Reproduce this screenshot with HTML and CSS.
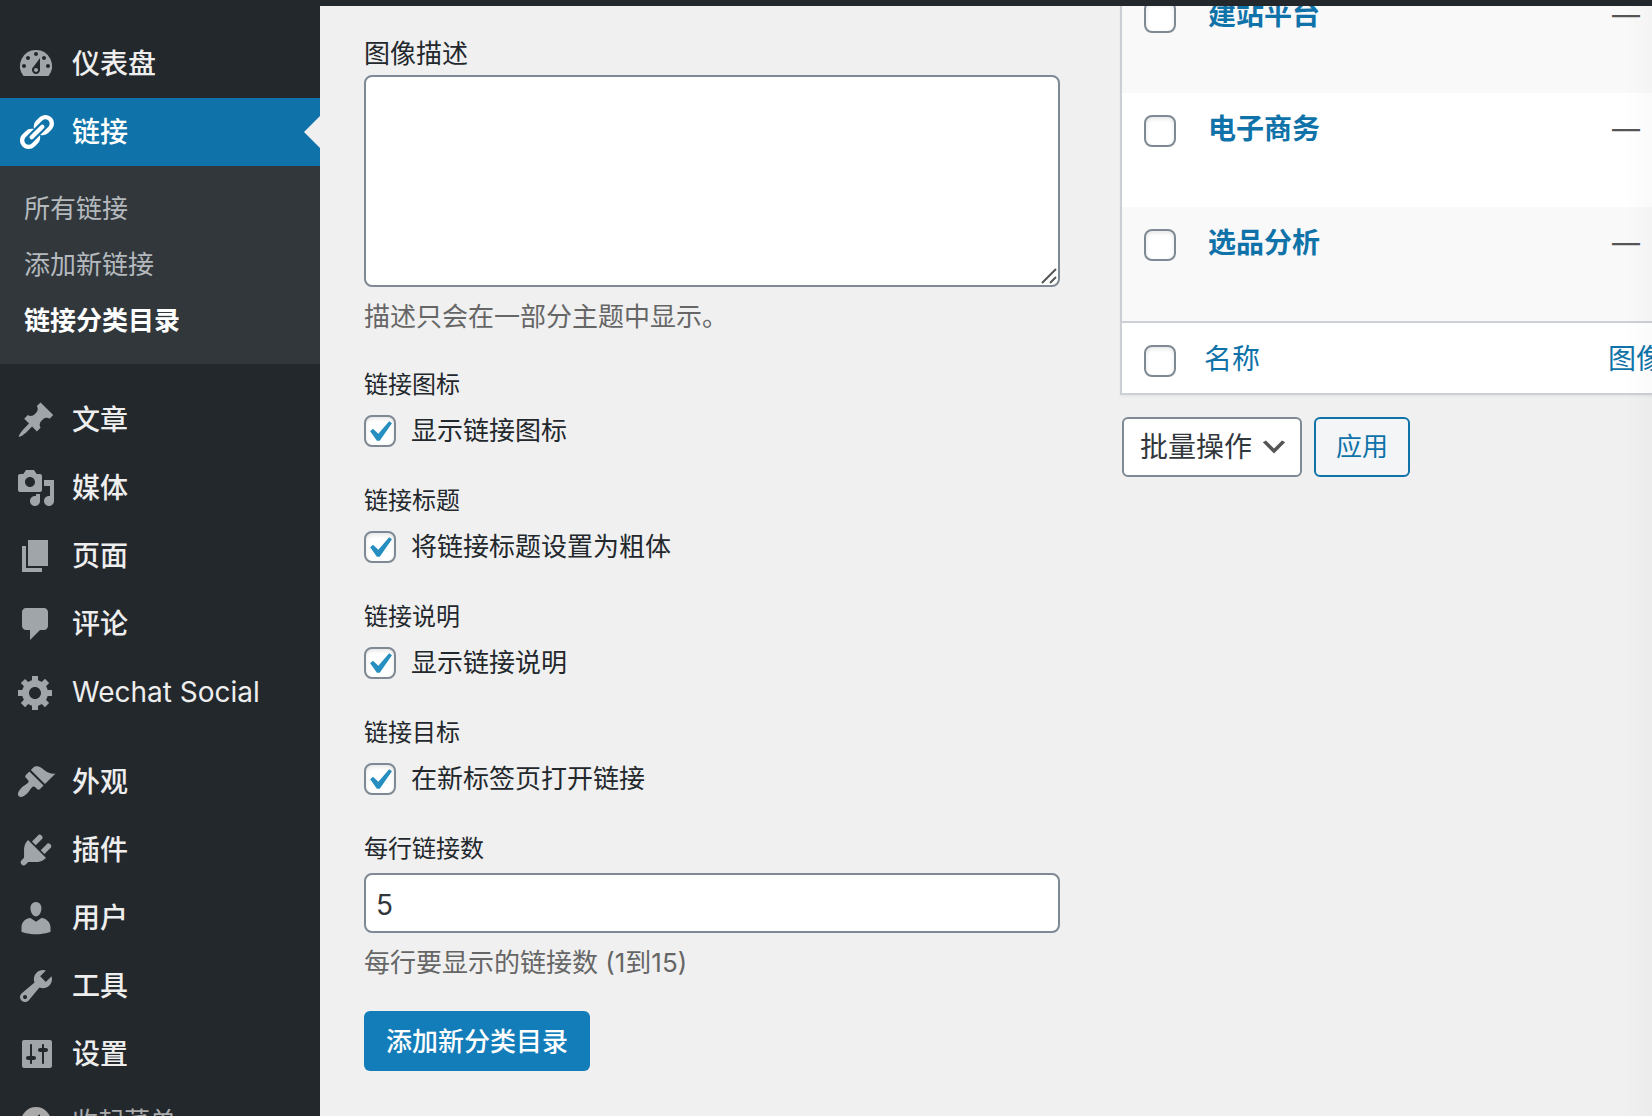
FILE: index.html
```html
<!DOCTYPE html>
<html lang="zh-CN">
<head>
<meta charset="utf-8">
<title>链接分类目录</title>
<link rel="stylesheet" href="styles.css">
</head>
<body>
<header class="admin-bar"></header>
<div class="layout">
  <nav class="sidebar">
    <ul class="menu">
      <li><a class="menu-item" href="#"><svg class="icon" viewBox="0 0 20 20"><path fill-rule="evenodd" d="M3.76 16h12.48A7.998 7.998 0 0 0 10 3a7.998 7.998 0 0 0-6.24 13zM10 4c.55 0 1 .45 1 1s-.45 1-1 1-1-.45-1-1 .45-1 1-1zM6 6c.55 0 1 .45 1 1s-.45 1-1 1-1-.45-1-1 .45-1 1-1zm8 0c.55 0 1 .45 1 1s-.45 1-1 1-1-.45-1-1 .45-1 1-1zm-5.37 5.55L12 7v6c0 1.1-.9 2-2 2s-2-.9-2-2c0-.57.24-1.08.63-1.45zM4 10c.55 0 1 .45 1 1s-.45 1-1 1-1-.45-1-1 .45-1 1-1zm12 0c.55 0 1 .45 1 1s-.45 1-1 1-1-.45-1-1 .45-1 1-1zm-5 3c0-.55-.45-1-1-1s-1 .45-1 1 .45 1 1 1 1-.45 1-1z"/></svg>仪表盘</a></li>
      <li>
        <a class="menu-item current" href="#"><svg class="icon" viewBox="0 0 20 20"><path d="M17.74 2.76c1.68 1.69 1.68 4.41 0 6.1l-1.53 1.52c-1.12 1.12-2.7 1.47-4.14 1.09l2.62-2.61.76-.77.76-.76c.84-.84.84-2.2 0-3.04-.84-.85-2.2-.85-3.04 0l-.77.76-3.38 3.38c-.37-1.44-.02-3.02 1.1-4.14l1.52-1.53c1.69-1.68 4.42-1.68 6.1 0zM8.59 13.43l5.34-5.34c.42-.42.42-1.1 0-1.52-.44-.43-1.13-.39-1.53 0l-5.33 5.34c-.42.42-.42 1.1 0 1.52.44.43 1.13.39 1.52 0zm-.76 2.29l4.14-4.15c.38 1.44.03 3.02-1.09 4.14l-1.52 1.53c-1.69 1.68-4.41 1.68-6.1 0-1.68-1.68-1.68-4.42 0-6.1l1.53-1.52c1.12-1.12 2.7-1.47 4.14-1.1l-4.14 4.15c-.85.84-.85 2.2 0 3.05.84.84 2.2.84 3.04 0z"/></svg>链接</a>
        <ul class="submenu">
          <li><a href="#">所有链接</a></li>
          <li><a href="#">添加新链接</a></li>
          <li><a class="active" href="#">链接分类目录</a></li>
        </ul>
      </li>
    </ul>
    <ul class="menu">
      <li><a class="menu-item" href="#"><svg class="icon" viewBox="0 0 20 20"><path d="M10.44 3.02l1.82-1.82 6.36 6.35-1.83 1.82c-1.05-.68-2.48-.57-3.41.36l-.75.75c-.92.93-1.04 2.35-.35 3.41l-1.83 1.82-2.41-2.41-2.8 2.79c-.42.42-3.38 2.71-3.8 2.29s1.86-3.39 2.28-3.81l2.79-2.79L4.1 9.36l1.83-1.82c1.05.69 2.48.57 3.4-.36l.75-.75c.93-.92 1.05-2.35.36-3.41z"/></svg>文章</a></li>
      <li><a class="menu-item" href="#"><svg class="icon" viewBox="0 0 20 20"><path fill-rule="evenodd" d="M13 11V4c0-.55-.45-1-1-1h-1.67L9 1H5L3.67 3H2c-.55 0-1 .45-1 1v7c0 .55.45 1 1 1h10c.55 0 1-.45 1-1zM7 4.5c1.38 0 2.5 1.12 2.5 2.5S8.38 9.5 7 9.5 4.5 8.38 4.5 7 5.62 4.5 7 4.5zM14 6h5v10.5c0 1.38-1.12 2.5-2.5 2.5S14 17.88 14 16.5s1.12-2.5 2.5-2.5c.17 0 .34.02.5.05V9h-3V6zm-4 8.05V13h2v3.5c0 1.38-1.12 2.5-2.5 2.5S7 17.88 7 16.5 8.12 14 9.5 14c.17 0 .34.02.5.05z"/></svg>媒体</a></li>
      <li><a class="menu-item" href="#"><svg class="icon" viewBox="0 0 20 20"><path d="M6 15V2h10v13H6zm-1 1h8v2H3V5h2v11z"/></svg>页面</a></li>
      <li><a class="menu-item" href="#"><svg class="icon" viewBox="0 0 20 20"><path d="M5 2h9c1.1 0 2 .9 2 2v7c0 1.1-.9 2-2 2h-2l-5 5v-5H5c-1.1 0-2-.9-2-2V4c0-1.1.9-2 2-2z"/></svg>评论</a></li>
      <li><a class="menu-item latin" href="#"><svg class="icon" viewBox="0 0 20 20"><path fill-rule="evenodd" d="M18 12h-2.18c-.17.7-.44 1.35-.81 1.93l1.54 1.54-2.1 2.1-1.54-1.54c-.58.36-1.23.63-1.91.79V19H8v-2.18c-.68-.16-1.33-.43-1.91-.79l-1.54 1.54-2.12-2.12 1.54-1.54c-.36-.58-.63-1.23-.79-1.91H1V9.03h2.17c.16-.7.44-1.35.8-1.94L2.43 5.55l2.1-2.1 1.54 1.54c.58-.37 1.24-.64 1.93-.81V2h3v2.18c.68.16 1.33.43 1.91.79l1.54-1.54 2.12 2.12-1.54 1.54c.36.59.64 1.24.8 1.94H18V12zm-8.5 1.5c1.66 0 3-1.34 3-3s-1.34-3-3-3-3 1.34-3 3 1.34 3 3 3z"/></svg>Wechat Social</a></li>
    </ul>
    <ul class="menu">
      <li><a class="menu-item" href="#"><svg class="icon" viewBox="0 0 20 20"><path d="M14.48 11.06L7.41 3.99l1.5-1.5c.5-.56 2.3-.47 3.51.32 1.21.8 1.43 1.28 2.91 2.1 1.18.64 2.45 1.26 4.45.85zm-.71.71L6.7 4.7 4.93 6.47c-.39.39-.39 1.02 0 1.41l1.06 1.06c.39.39.39 1.03 0 1.42-.6.6-1.43 1.11-2.21 1.69-.35.26-.7.53-1.01.84C1.43 14.23.4 16.08 1.4 17.07c.99 1 2.84-.03 4.18-1.36.31-.31.58-.66.85-1.02.57-.78 1.08-1.61 1.69-2.21.39-.39 1.02-.39 1.41 0l1.06 1.06c.39.39 1.02.39 1.41 0z"/></svg>外观</a></li>
      <li><a class="menu-item" href="#"><svg class="icon" viewBox="0 0 20 20"><path d="M13.11 4.36L9.87 7.6 8 5.73l3.24-3.24c.35-.34 1.05-.2 1.56.32.52.51.66 1.21.31 1.55zm-8 1.77l.91-1.12 9.01 9.01-1.19.84c-.71.71-2.63 1.16-3.82 1.16H6.14L4.9 17.26c-.59.59-1.54.59-2.12 0-.59-.58-.59-1.53 0-2.12l1.24-1.24v-3.88c0-1.13.4-3.19 1.09-3.89zm7.26 3.97l3.24-3.24c.34-.35 1.04-.21 1.55.31.52.51.66 1.21.31 1.55l-3.24 3.25z"/></svg>插件</a></li>
      <li><a class="menu-item" href="#"><svg class="icon" viewBox="0 0 20 20"><path d="M10 9.25c-2.27 0-2.73-3.44-2.73-3.44C7 4.02 7.82 2 9.97 2c2.16 0 2.98 2.02 2.71 3.81 0 0-.41 3.44-2.68 3.44zm0 2.57L12.72 10c2.39 0 4.52 2.33 4.52 4.53v2.49s-3.65 1.13-7.24 1.13c-3.65 0-7.24-1.13-7.24-1.13v-2.49c0-2.25 1.94-4.48 4.47-4.48z"/></svg>用户</a></li>
      <li><a class="menu-item" href="#"><svg class="icon" viewBox="0 0 20 20"><path fill-rule="evenodd" d="M16.68 9.77c-1.34 1.34-3.3 1.67-4.95.99l-5.41 6.52c-.99.99-2.59.99-3.58 0s-.99-2.59 0-3.57l6.52-5.42c-.68-1.65-.35-3.61.99-4.95 1.28-1.28 3.12-1.62 4.72-1.06l-2.89 2.89 2.82 2.82 2.86-2.87c.53 1.58.18 3.39-1.08 4.65zM3.81 16.21c.4.39 1.04.39 1.43 0 .4-.4.4-1.04 0-1.43-.39-.4-1.03-.4-1.43 0-.39.39-.39 1.03 0 1.43z"/></svg>工具</a></li>
      <li><a class="menu-item" href="#"><svg class="icon" viewBox="0 0 20 20"><path fill-rule="evenodd" d="M18 16V4c0-.55-.45-1-1-1H4c-.55 0-1 .45-1 1v12c0 .55.45 1 1 1h13c.55 0 1-.45 1-1zM8 11h1c.55 0 1 .45 1 1s-.45 1-1 1H8v1.5c0 .28-.22.5-.5.5s-.5-.22-.5-.5V13H6c-.55 0-1-.45-1-1s.45-1 1-1h1V5.5c0-.28.22-.5.5-.5s.5.22.5.5V11zm5-2h-1c-.55 0-1-.45-1-1s.45-1 1-1h1V5.5c0-.28.22-.5.5-.5s.5.22.5.5V7h1c.55 0 1 .45 1 1s-.45 1-1 1h-1v5.5c0 .28-.22.5-.5.5s-.5-.22-.5-.5V9z"/></svg>设置</a></li>
      <li><button class="menu-item collapse" type="button"><svg class="icon" viewBox="0 0 20 20"><path fill-rule="evenodd" d="M10 2.5a7.5 7.5 0 1 1 0 15a7.5 7.5 0 0 1 0-15zM12 13.88V6.12L6.18 9.97z"/></svg>收起菜单</button></li>
    </ul>
  </nav>
  <main class="content">
    <form class="form">
      <div class="field">
        <label class="label label-large" for="description">图像描述</label>
        <div class="textarea-wrap">
          <textarea id="description" class="textarea"></textarea>
          <svg class="grip" viewBox="0 0 16 16"><path d="M1 15L15 1M9 15L15 9"/></svg>
        </div>
        <p class="help">描述只会在一部分主题中显示。</p>
      </div>
      <fieldset class="option">
        <legend class="label">链接图标</legend>
        <label class="check-row"><input class="checkbox" type="checkbox" checked>显示链接图标</label>
      </fieldset>
      <fieldset class="option">
        <legend class="label">链接标题</legend>
        <label class="check-row"><input class="checkbox" type="checkbox" checked>将链接标题设置为粗体</label>
      </fieldset>
      <fieldset class="option">
        <legend class="label">链接说明</legend>
        <label class="check-row"><input class="checkbox" type="checkbox" checked>显示链接说明</label>
      </fieldset>
      <fieldset class="option">
        <legend class="label">链接目标</legend>
        <label class="check-row"><input class="checkbox" type="checkbox" checked>在新标签页打开链接</label>
      </fieldset>
      <div class="field">
        <label class="label" for="per-row">每行链接数</label>
        <input id="per-row" class="text-input" type="text" value="5">
        <p class="help">每行要显示的链接数 (1到15)</p>
      </div>
      <button class="button-primary" type="button">添加新分类目录</button>
    </form>
    <section class="list">
      <table class="table">
        <colgroup><col class="col-check"><col class="col-name"><col></colgroup>
        <tbody>
          <tr><td class="check"><input class="checkbox" type="checkbox" aria-label="选择建站平台"></td><td><a class="name" href="#">建站平台</a></td><td>—</td></tr>
          <tr><td class="check"><input class="checkbox" type="checkbox" aria-label="选择电子商务"></td><td><a class="name" href="#">电子商务</a></td><td>—</td></tr>
          <tr><td class="check"><input class="checkbox" type="checkbox" aria-label="选择选品分析"></td><td><a class="name" href="#">选品分析</a></td><td>—</td></tr>
        </tbody>
        <tfoot>
          <tr><td class="check"><input class="checkbox" type="checkbox" aria-label="全选"></td><th scope="col"><a href="#">名称</a></th><th scope="col"><a href="#">图像</a></th></tr>
        </tfoot>
      </table>
      <div class="bulk">
        <select class="select" aria-label="批量操作"><option>批量操作</option></select>
        <button class="button" type="button">应用</button>
      </div>
    </section>
  </main>
</div>
</body>
</html>
```
FILE: styles.css
```css
* { box-sizing: border-box; }

body {
  margin: 0;
  height: 100vh;
  overflow: hidden;
  display: flex;
  flex-direction: column;
  background: #f0f0f0;
  color: #23282d;
  font-family: Inter, "Noto Sans CJK SC", sans-serif;
  font-size: 26px;
  line-height: 40px;
}

button, input, select, textarea { font: inherit; margin: 0; }
a { color: #0f73a9; text-decoration: none; }
ul { list-style: none; margin: 0; padding: 0; }

.admin-bar { flex: none; height: 6px; background: #23282d; }
.layout { flex: 1; min-height: 0; display: flex; }

/* Sidebar */
.sidebar {
  flex: none;
  width: 320px;
  padding-top: 24px;
  overflow: hidden;
  background: #23282d;
}
.menu { margin-bottom: 22px; }
.menu-item {
  display: flex;
  align-items: center;
  gap: 16px;
  width: 100%;
  height: 68px;
  padding: 0 16px;
  color: #eee;
  font-size: 28px;
  font-weight: 500;
}
.latin { font-weight: 400; }
.icon { flex: none; width: 40px; height: 40px; fill: #a0a5aa; }
.current { position: relative; background: #0f73a9; color: #fff; }
.current .icon { fill: #fff; }
.current::after {
  content: "";
  position: absolute;
  right: 0;
  top: 18px;
  border: 16px solid transparent;
  border-left-width: 0;
  border-right-color: #f0f0f0;
}
.collapse { border: 0; background: none; color: #aaa; font-size: 26px; font-weight: 400; }
.collapse .icon { fill: #aaa; }
.submenu { padding: 15px 0; background: #32373c; }
.submenu a { display: block; padding: 8px 24px; color: #b4b9be; }
.submenu .active { color: #fff; font-weight: 600; }

/* Content */
.content {
  position: relative;
  flex: 1;
  min-width: 0;
  overflow: hidden;
  display: grid;
  grid-template-columns: minmax(0, 174fr) minmax(0, 133fr);
  gap: 60px;
  align-items: start;
  padding-left: 44px;
}
.content::after {
  content: "";
  position: absolute;
  inset: 0 0 0 auto;
  width: 28px;
  background: linear-gradient(to right, transparent, rgba(0, 0, 0, 0.02));
  pointer-events: none;
}

.form { padding-top: 28px; }
.label { display: block; padding: 0; font-size: 24px; line-height: 40px; }
.label-large { font-size: 26px; }
.field .label { margin-bottom: 4px; }
.field .label-large { margin-bottom: 1px; }
.textarea-wrap { position: relative; }
.textarea, .text-input {
  display: block;
  width: 100%;
  border: 2px solid #7e8993;
  border-radius: 8px;
  background: #fff;
  color: #32373c;
}
.textarea { height: 212px; padding: 4px 12px; resize: none; }
.text-input { height: 60px; padding: 3px 10px 0; font-size: 28px; }
.grip {
  position: absolute;
  right: 3px;
  bottom: 3px;
  width: 16px;
  height: 16px;
  fill: none;
  stroke: #555;
  stroke-width: 2;
}
.help { margin: 10px 0 0; color: #666; }
.field + .option { margin-top: 28px; }
.option { margin: 0 0 32px; padding: 0; border: 0; }
.check-row { display: flex; align-items: center; gap: 15px; height: 44px; padding-top: 8px; }

.checkbox {
  appearance: none;
  flex: none;
  display: block;
  width: 32px;
  height: 32px;
  border: 2px solid #7e8993;
  border-radius: 8px;
  background: #fff;
  box-shadow: inset 0 2px 4px rgba(0, 0, 0, 0.1);
}
.checkbox:checked {
  background: #fff url("data:image/svg+xml,%3Csvg xmlns='http://www.w3.org/2000/svg' viewBox='0 0 20 20'%3E%3Cpath d='M14.83 4.89l1.34.94-5.81 8.38H9.02L5.78 9.67l1.34-1.25 2.57 2.4z' fill='%23268fc0'/%3E%3C/svg%3E") -8px -6px / 42px 42px no-repeat;
}

.button-primary {
  height: 60px;
  margin-top: 28px;
  padding: 2px 22px 0;
  border: 0;
  border-radius: 6px;
  background: #137dba;
  color: #fff;
  font-weight: 500;
}

/* Category list */
.list { margin-top: -29px; }
.table {
  width: 700px;
  table-layout: fixed;
  border: 2px solid #ccd0d4;
  border-spacing: 0;
  background: #fff;
  box-shadow: 0 2px 2px rgba(0, 0, 0, 0.04);
  font-size: 28px;
}
.col-check { width: 66px; }
.col-name { width: 404px; }
.table td, .table th { padding: 16px; text-align: left; font-weight: 400; vertical-align: top; color: #555; }
.table tbody td { height: 114px; padding-left: 20px; }
.table tbody tr:nth-child(odd) { background: #f9f9f9; }
.table tfoot td, .table tfoot th { height: 72px; padding-bottom: 12px; border-top: 2px solid #ccd0d4; }
.table tbody td.check, .table tfoot td.check { padding: 22px 0 0 22px; }
.name { font-weight: 600; }

.bulk { display: flex; gap: 12px; margin: 22px 0 0 2px; }
.select {
  appearance: none;
  height: 60px;
  padding: 0 47px 0 16px;
  border: 2px solid #7e8993;
  border-radius: 6px;
  background: #fff url("data:image/svg+xml,%3Csvg xmlns='http://www.w3.org/2000/svg' viewBox='0 0 20 20'%3E%3Cpath d='M5 6l5 5 5-5 2 1-7 7-7-7 2-1z' fill='%23555'/%3E%3C/svg%3E") right 10px center / 32px 32px no-repeat;
  color: #32373c;
  font-size: 28px;
}
.button {
  height: 60px;
  padding: 0 20px;
  border: 2px solid #0f73a9;
  border-radius: 6px;
  background: #f3f5f6;
  color: #0f73a9;
}
```
